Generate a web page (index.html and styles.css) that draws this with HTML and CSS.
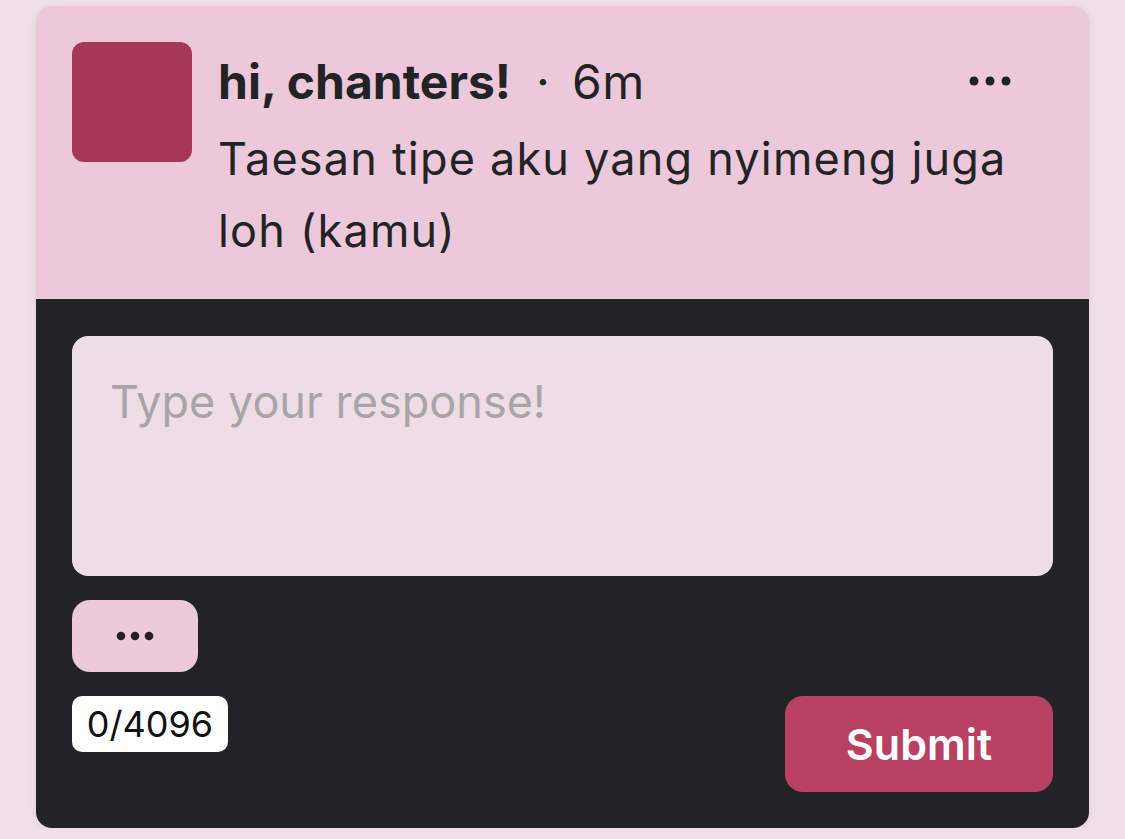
FILE: index.html
```html
<!DOCTYPE html>
<html>
<head>
<meta charset="utf-8">
<link rel="stylesheet" href="styles.css">
</head>
<body>
<div class="card">
  <div class="post">
    <div class="avatar"></div>
    <div class="content">
      <div class="head">
        <span class="name">hi, chanters!</span>
        <span class="sep">·</span>
        <span class="time">6m</span>
        <button class="more" aria-label="More">
          <svg width="42" height="10" viewBox="0 0 42 10"><circle cx="5" cy="5" r="4.5" fill="#222"/><circle cx="21" cy="5" r="4.5" fill="#222"/><circle cx="37" cy="5" r="4.5" fill="#222"/></svg>
        </button>
      </div>
      <p class="text">Taesan tipe aku yang nyimeng juga loh (kamu)</p>
    </div>
  </div>
  <div class="reply">
    <textarea class="input" placeholder="Type your response!"></textarea>
    <button class="opts" aria-label="Options">
      <svg width="40" height="10" viewBox="0 0 40 10"><circle cx="6" cy="5" r="4.3" fill="#222"/><circle cx="20" cy="5" r="4.3" fill="#222"/><circle cx="34" cy="5" r="4.3" fill="#222"/></svg>
    </button>
    <div class="footer">
      <span class="count">0/4096</span>
      <button class="submit">Submit</button>
    </div>
  </div>
</div>
</body>
</html>
```
FILE: styles.css
```css
* { box-sizing: border-box; }
html, body { margin: 0; padding: 0; }
body {
  background: #f0dfe6;
  font-family: Inter, "Noto Sans", sans-serif;
  color: #232325;
  padding: 6px 36px 0 36px;
}
.card {
  width: 1053px;
  height: 822px;
  border-radius: 16px;
  overflow: hidden;
  box-shadow: 0 1px 6px rgba(120, 60, 90, 0.12);
  display: flex;
  flex-direction: column;
}
.post {
  background: #ebc8da;
  padding: 36px 36px 0 36px;
  height: 293px;
  display: flex;
  gap: 26px;
}
.avatar {
  width: 120px;
  height: 120px;
  flex: none;
  border-radius: 12px;
  background: #a63856;
}
.content { flex: 1; min-width: 0; }
.head {
  display: flex;
  align-items: baseline;
  height: 58px;
  line-height: 58px;
  margin-top: 11px;
}
.name {
  font-weight: 700;
  font-size: 48px;
  letter-spacing: 0;
}
.sep {
  font-size: 48px;
  margin: 0 22px 0 25px;
}
.time {
  font-size: 48px;
  font-weight: 400;
  letter-spacing: 0.5px;
}
.more {
  margin-left: auto;
  margin-right: 42px;
  background: none;
  border: 0;
  padding: 0;
  display: flex;
  align-self: center;
  margin-top: -2px;
}
.text {
  margin: 0;
  font-size: 45px;
  letter-spacing: 1.2px;
  line-height: 72px;
  margin-top: 12px;
}
.reply {
  flex: 1;
  background: #232325;
  padding: 37px 36px 36px 36px;
  display: flex;
  flex-direction: column;
}
.input {
  display: block;
  width: 100%;
  height: 240px;
  border: 0;
  border-radius: 16px;
  background: #eedde4;
  padding: 39px 38px;
  font-family: Inter, "Noto Sans", sans-serif;
  font-size: 45px;
  line-height: 54px;
  color: #232325;
  resize: none;
  outline: none;
}
.input::placeholder { color: #a9a4a7; }
.opts {
  margin-top: 24px;
  width: 126px;
  height: 72px;
  border: 0;
  border-radius: 18px;
  background: #ebc8da;
  display: flex;
  align-items: center;
  justify-content: center;
  padding: 0;
}
.footer {
  margin-top: 24px;
  display: flex;
  justify-content: space-between;
  align-items: flex-start;
}
.count {
  background: #fff;
  color: #111;
  font-size: 36px;
  border-radius: 10px;
  height: 56px;
  width: 156px;
  display: flex;
  align-items: center;
  justify-content: center;
}
.submit {
  width: 268px;
  height: 96px;
  border: 0;
  border-radius: 18px;
  background: #b84063;
  color: #fff;
  font-family: Inter, "Noto Sans", sans-serif;
  font-weight: 600;
  font-size: 43px;
}
```
